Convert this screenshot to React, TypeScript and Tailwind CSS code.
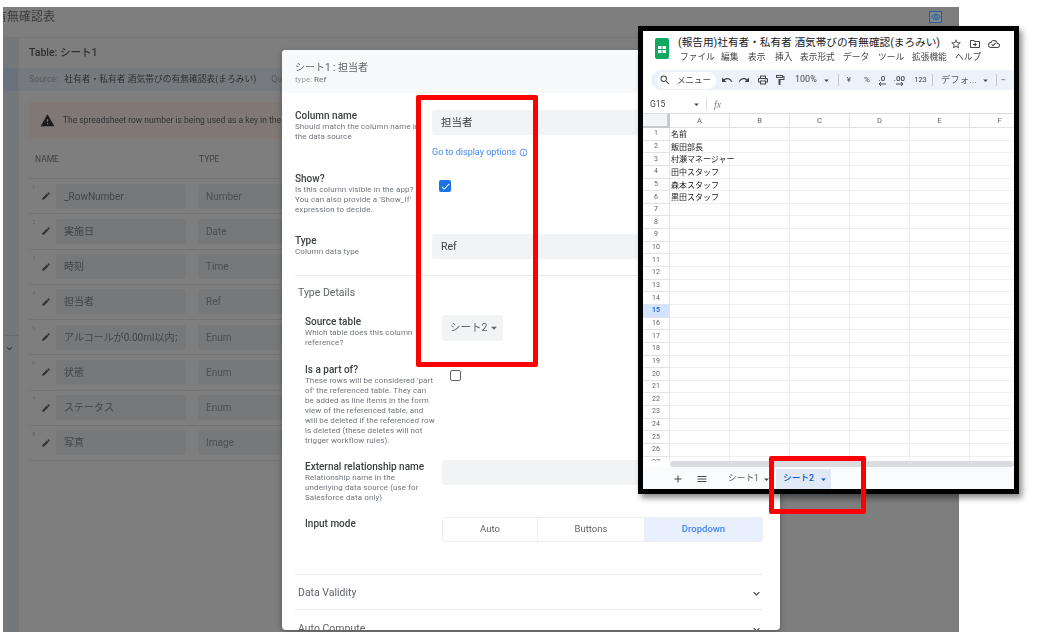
import {
  MdAdd,
  MdArrowDropDown,
  MdCheck,
  MdEdit,
  MdInfoOutline,
  MdKeyboardArrowDown,
  MdMenu,
  MdOutlineCloudDone,
  MdOutlineDriveFileMove,
  MdOutlineFormatPaint,
  MdOutlinePrint,
  MdOutlineStarBorder,
  MdOutlineVisibility,
  MdRedo,
  MdSearch,
  MdUndo,
  MdWarning,
} from "react-icons/md";

const columns = [
  ["_RowNumber", "Number"],
  ["実施日", "Date"],
  ["時刻", "Time"],
  ["担当者", "Ref"],
  ["アルコールが0.00ml以内か", "Enum"],
  ["状態", "Enum"],
  ["ステータス", "Enum"],
  ["写真", "Image"],
];

const menus = [
  ["ファイル", "w-[41px]"],
  ["編集", "w-[27px]"],
  ["表示", "w-[27px]"],
  ["挿入", "w-[25px]"],
  ["表示形式", "w-[43px]"],
  ["データ", "w-[35px]"],
  ["ツール", "w-[34px]"],
  ["拡張機能", "w-[43px]"],
  ["ヘルプ", "w-[36px]"],
];

const names = ["名前", "飯田部長", "村瀬マネージャー", "田中スタッフ", "森本スタッフ", "黒田スタッフ"];
const gridCols = ["A", "B", "C", "D", "E", "F"];

const Label = ({ title, lines }: { title: string; lines: string[] }) => (
  <div className="-mt-px w-[137px] shrink-0">
    <div className="text-[10px] font-medium leading-[13px] text-[#3c4043]">{title}</div>
    {lines.map((l) => (
      <div key={l} className="whitespace-nowrap text-[8px] leading-[10px] tracking-[0.1px] text-[#70757a]">
        {l}
      </div>
    ))}
  </div>
);

const DecimalIcon = ({ text, dir }: { text: string; dir: "left" | "right" }) => (
  <span className="flex flex-col items-center text-[8px] font-medium leading-[7px]">
    {text}
    <svg viewBox="0 0 8 4" className="h-[4px] w-[8px]">
      <path d={dir === "left" ? "M8 2H1M3 0L1 2l2 2" : "M0 2h7M5 0l2 2-2 2"} fill="none" stroke="currentColor" strokeWidth="1" />
    </svg>
  </span>
);

const BackgroundApp = () => (
  <div className="ml-[3px] flex h-[625px] w-[956px] flex-col bg-[#7e7e7e] blur-[0.4px]">
    <div className="h-[30px] overflow-hidden whitespace-nowrap text-[12px] leading-[21px] text-[#3b3c3d]">
      <span className="-ml-[8px] inline-block">有無確認表</span>
    </div>
    <div className="flex flex-1 border-t border-[#757575]">
      <div className="flex w-[16px] shrink-0 flex-col border-r border-[#777777] bg-[#75787b]">
        <div className="mt-[30px] h-[23px] bg-[#69737f]" />
        <div className="mt-[244px] h-px bg-[#696b6d]" />
        <MdKeyboardArrowDown className="ml-[1px] mt-[7px] text-[11px] text-[#2f3031]" />
      </div>
      <div className="min-w-0 flex-1">
        <div className="h-[30px] pl-[10px] text-[10.5px] font-medium leading-[29px] text-[#2e2f30]">Table: シート1</div>
        <div className="flex h-[23px] items-center gap-[6px] whitespace-nowrap bg-[#767a7e] pl-[10px] text-[8.75px] text-[#55585a]">
          <span>Source:</span>
          <span className="text-[#2f3031]">社有者・私有者 酒気帯びの有無確認表(まろみい)</span>
          <span className="ml-[9px]">Qu</span>
        </div>
        <div className="mx-[10px] mt-[11px] flex h-[37px] items-center rounded-[2px] bg-[#7f7874] pl-[11px] text-[8.5px] text-[#333435]">
          <MdWarning className="mr-[8px] text-[15px] text-[#1c1c1c]" />
          <span className="whitespace-nowrap">The spreadsheet row number is being used as a key in the table</span>
        </div>
        <div className="ml-[16px] flex h-[39px] items-center pt-[2px] text-[8.5px] text-[#3f4041]">
          <span className="w-[164px]">NAME</span>
          <span>TYPE</span>
        </div>
        <div className="mx-[10px]">
          {columns.map(([name, type], i) => (
            <div key={name} className="relative flex h-[35.25px] items-center border-t border-[#737373]">
              <span className="absolute left-[3px] top-[3px] text-[6px] text-[#666666]">{i + 1}</span>
              <MdEdit className="ml-[12px] mr-[1px] text-[10px] text-[#333435]" />
              <div className="ml-[4px] flex h-[25px] w-[130px] items-center rounded-[3px] bg-[#777879] pl-[8px] text-[10px] text-[#434445]">
                <span className="w-[113px] overflow-hidden whitespace-nowrap">{name}</span>
              </div>
              <div className="ml-[12px] flex h-[25px] w-[200px] items-center rounded-[3px] bg-[#777879] pl-[8px] text-[10px] text-[#4d4e4f]">
                {type}
              </div>
            </div>
          ))}
          <div className="border-t border-[#737373]" />
        </div>
      </div>
    </div>
  </div>
);

const ColumnModal = () => (
  <div className="absolute left-[282px] top-[50px] h-[580px] w-[498px] overflow-hidden rounded-[4px] bg-white shadow-[0_2px_6px_rgba(0,0,0,0.3)]">
    <div className="h-full blur-[0.3px]">
      <div className="h-[43px] bg-[#f8f9fa] pl-[13px] pt-[11px]">
        <div className="text-[10px] leading-[13px] text-[#5f6368]">シート1 : 担当者</div>
        <div className="text-[8px] leading-[12px] text-[#9aa0a6]">
          type: <span className="font-medium text-[#80868b]">Ref</span>
        </div>
      </div>
      <div className="pl-[13px] pr-[17px] pt-[17px]">
        <div className="flex h-[63px]">
          <Label title="Column name" lines={["Should match the column name in", "the data source"]} />
          <div className="flex-1">
            <div className="flex h-[25px] items-center rounded-[3px] bg-[#f1f3f4] pl-[9px] text-[10.5px] text-[#3c4043]">担当者</div>
            <div className="mt-[11px] flex items-center gap-[3px] text-[9px] leading-[12px] text-[#4285f4]">
              Go to display options
              <MdInfoOutline className="text-[9px]" />
            </div>
          </div>
        </div>
        <div className="flex h-[61px]">
          <Label title="Show?" lines={["Is this column visible in the app?", "You can also provide a 'Show_If'", "expression to decide."]} />
          <div className="ml-[7px] mt-[7px] flex h-[12px] w-[12px] items-center justify-center rounded-[2px] bg-[#1a73e8]">
            <MdCheck className="text-[11px] text-white" />
          </div>
        </div>
        <div className="flex h-[41px]">
          <div className="pt-px">
            <Label title="Type" lines={["Column data type"]} />
          </div>
          <div className="flex h-[25px] flex-1 items-center rounded-[3px] bg-[#f1f3f4] pl-[9px] pt-px text-[10.5px] text-[#3c4043]">Ref</div>
        </div>
        <div className="border-t border-[#e8eaed]" />
        <div className="pl-[3px] pt-[10px] text-[10.5px] leading-[13px] text-[#5f6368]">Type Details</div>
        <div className="pl-[10px]">
          <div className="mt-[16px] flex h-[49px]">
            <div className="pt-px">
              <Label title="Source table" lines={["Which table does this column", "reference?"]} />
            </div>
            <div className="flex h-[26px] w-[61px] items-center rounded-[3px] bg-[#f1f3f4] pl-[8px] text-[10.5px] text-[#5f6368]">
              シート2
              <MdArrowDropDown className="text-[14px]" />
            </div>
          </div>
          <div className="flex h-[96px]">
            <Label
              title="Is a part of?"
              lines={[
                "These rows will be considered 'part",
                "of' the referenced table. They can",
                "be added as line items in the form",
                "view of the referenced table, and",
                "will be deleted if the referenced row",
                "is deleted (these deletes will not",
                "trigger workflow rules).",
              ]}
            />
            <div className="ml-[8px] mt-[6px] h-[11px] w-[11px] rounded-[2px] border border-[#5f6368]" />
          </div>
          <div className="flex h-[51px]">
            <div className="pt-px">
              <Label title="External relationship name" lines={["Relationship name in the", "underlying data source (use for", "Salesforce data only)"]} />
            </div>
            <div className="h-[25px] flex-1 rounded-[3px] bg-[#f1f3f4]" />
          </div>
          <div className="mt-[6px] flex h-[57px]">
            <div className="pt-px">
              <Label title="Input mode" lines={[]} />
            </div>
            <div className="flex h-[25px] flex-1 overflow-hidden rounded-[3px] border border-[#eceef0] text-[9.5px] text-[#5f6368]">
              <div className="flex w-[95px] items-center justify-center border-r border-[#eceef0]">Auto</div>
              <div className="flex w-[107px] items-center justify-center border-r border-[#eceef0]">Buttons</div>
              <div className="flex flex-1 items-center justify-center bg-[#e8f0fe] font-medium text-[#4285f4]">Dropdown</div>
            </div>
          </div>
        </div>
        <div className="flex h-[35px] items-center justify-between border-t border-[#e8eaed] pl-[3px] pt-[2px] text-[10.5px] text-[#5f6368]">
          Data Validity
          <MdKeyboardArrowDown className="text-[13px] text-[#3c4043]" />
        </div>
        <div className="flex h-[35px] items-center justify-between border-t border-[#e8eaed] pl-[3px] pt-[4px] text-[10.5px] text-[#5f6368]">
          Auto Compute
          <MdKeyboardArrowDown className="text-[13px] text-[#3c4043]" />
        </div>
      </div>
    </div>
  </div>
);

const SheetsWindow = () => (
  <div className="absolute left-[638px] top-[26px] h-[468px] w-[381px] overflow-hidden border-[5px] border-black bg-white shadow-[3px_4px_6px_rgba(0,0,0,0.45)]">
    <div className="flex h-full flex-col blur-[0.3px]">
      <div className="flex h-[39px] shrink-0 bg-white">
        <svg viewBox="0 0 14 21" className="ml-[12px] mt-[7px] h-[21px] w-[14px]">
          <rect width="14" height="21" rx="2" fill="#11a861" />
          <rect x="3" y="8" width="8" height="7" fill="#fff" />
          <path d="M3 11.5h8M7 8v7" stroke="#11a861" strokeWidth="1" />
        </svg>
        <div className="ml-[9px] min-w-0 flex-1">
          <div className="flex h-[19px] items-end whitespace-nowrap text-[10.65px] leading-[15px] text-[#202124]">
            (報告用)社有者・私有者 酒気帯びの有無確認(まろみい)
            <MdOutlineStarBorder className="ml-[10px] text-[12px] text-[#444746]" />
            <MdOutlineDriveFileMove className="ml-[7px] text-[12px] text-[#444746]" />
            <MdOutlineCloudDone className="ml-[7px] text-[12px] text-[#444746]" />
          </div>
          <div className="ml-[2px] mt-[1px] flex text-[8.7px] leading-[13px] text-[#444746]">
            {menus.map(([m, w]) => (
              <span key={m} className={w}>
                {m}
              </span>
            ))}
          </div>
        </div>
      </div>
      <div className="ml-[8px] flex h-[20px] shrink-0 items-center whitespace-nowrap rounded-l-[10px] bg-[#edf2fa] text-[8.5px] text-[#444746]">
        <div className="ml-[6px] flex h-[17px] w-[59px] items-center rounded-full bg-white pl-[2px] text-[8.5px]">
          <MdSearch className="mr-[6px] text-[12px]" />
          メニュー
        </div>
        <MdUndo className="ml-[5px] text-[12px]" />
        <MdRedo className="ml-[5px] text-[12px]" />
        <MdOutlinePrint className="ml-[7px] text-[12px]" />
        <MdOutlineFormatPaint className="ml-[5px] text-[12px]" />
        <span className="ml-[9px] text-[9px]">100%</span>
        <MdArrowDropDown className="ml-[4px] text-[11px]" />
        <span className="ml-[6px] h-[12px] w-px bg-[#c7c7c7]" />
        <span className="ml-[8px] text-[8px]">¥</span>
        <span className="ml-[13px] text-[8px]">%</span>
        <span className="ml-[8px]">
          <DecimalIcon text=".0" dir="left" />
        </span>
        <span className="ml-[8px]">
          <DecimalIcon text=".00" dir="right" />
        </span>
        <span className="ml-[9px] text-[7.5px]">123</span>
        <span className="ml-[5px] h-[12px] w-px bg-[#c7c7c7]" />
        <span className="ml-[8px] text-[9.5px] text-[#5f6368]">デフォ...</span>
        <MdArrowDropDown className="ml-[3px] text-[11px]" />
        <span className="ml-[5px] h-[12px] w-px bg-[#c7c7c7]" />
        <span className="ml-[4px]">−</span>
      </div>
      <div className="flex h-[23px] shrink-0 items-center pt-[5px] text-[8.5px] text-[#444746]">
        <span className="ml-[7px] w-[41px]">G15</span>
        <MdArrowDropDown className="text-[11px]" />
        <span className="ml-[4px] h-[11px] w-px bg-[#dadce0]" />
        <span className="ml-[7px] font-['Liberation_Serif',serif] text-[10px] italic text-[#80868b]">fx</span>
      </div>
      <div className="flex h-[15px] shrink-0 border-t border-[#dadce0] text-[7.5px] text-[#5f6368]">
        <div className="w-[27px] shrink-0 border-b-[2px] border-r-[3px] border-[#c7c9cc] bg-[#f3f4f5]" />
        {gridCols.map((c) => (
          <div key={c} className="flex w-[60px] shrink-0 items-center justify-center border-b border-r border-[#e1e3e6] leading-none">
            {c}
          </div>
        ))}
      </div>
      <div className="min-h-0 flex-1 overflow-hidden">
        {Array.from({ length: 27 }, (_, i) => (
          <div key={i} className="flex h-[12.65px] text-[8px] leading-[13px] text-[#202124]">
            <div className={i === 14 ? "flex w-[27px] shrink-0 items-center justify-center border-b border-r border-[#e1e3e6] bg-[#d3e3fd] text-[7px] font-medium text-[#0b57d0]" : "flex w-[27px] shrink-0 items-center justify-center border-b border-r border-[#e1e3e6] text-[7px] text-[#5f6368]"}>
              {i + 1}
            </div>
            {gridCols.map((c) => (
              <div key={c} className="w-[60px] shrink-0 whitespace-nowrap border-b border-r border-[#eeeff1] pl-[1px]">
                {c === "A" ? names[i] : ""}
              </div>
            ))}
          </div>
        ))}
      </div>
      <div className="ml-[27px] h-[6px] shrink-0 rounded-[3px] bg-[#dadce0]" />
      <div className="flex h-[22px] shrink-0 items-end bg-[#f9fbfd] text-[8.7px] text-[#5f6368]">
        <div className="flex h-[20px] items-center">
          <MdAdd className="ml-[29px] text-[12px] text-[#444746]" />
          <MdMenu className="ml-[12px] text-[12px] text-[#444746]" />
          <span className="ml-[20px]">シート1</span>
          <MdArrowDropDown className="ml-[2px] text-[11px] text-[#444746]" />
          <div className="ml-[4px] flex h-[20px] w-[55px] items-center bg-[#e1e9f7] pl-[7px] font-medium text-[#0b57d0]">
            シート2
            <MdArrowDropDown className="ml-[4px] text-[11px]" />
          </div>
        </div>
      </div>
    </div>
  </div>
);

export default function App() {
  return (
    <div className="relative h-[632px] w-[1046px] overflow-hidden bg-white pt-[7px] font-['Roboto','Noto_Sans_CJK_JP',sans-serif]">
      <BackgroundApp />
      <div className="absolute left-[929px] top-[11px] flex h-[12px] w-[13px] items-center justify-center border border-[#2a5b92] bg-[#7c8a99]">
        <MdOutlineVisibility className="text-[10px] text-[#2a5b92]" />
      </div>
      <ColumnModal />
      <SheetsWindow />
      <div className="absolute left-[416px] top-[95px] h-[272px] w-[122px] rounded-[2px] border-[5px] border-[#ff0000]" />
      <div className="absolute left-[769px] top-[456px] h-[58px] w-[97px] rounded-[2px] border-[5px] border-[#ff0000]" />
    </div>
  );
}
